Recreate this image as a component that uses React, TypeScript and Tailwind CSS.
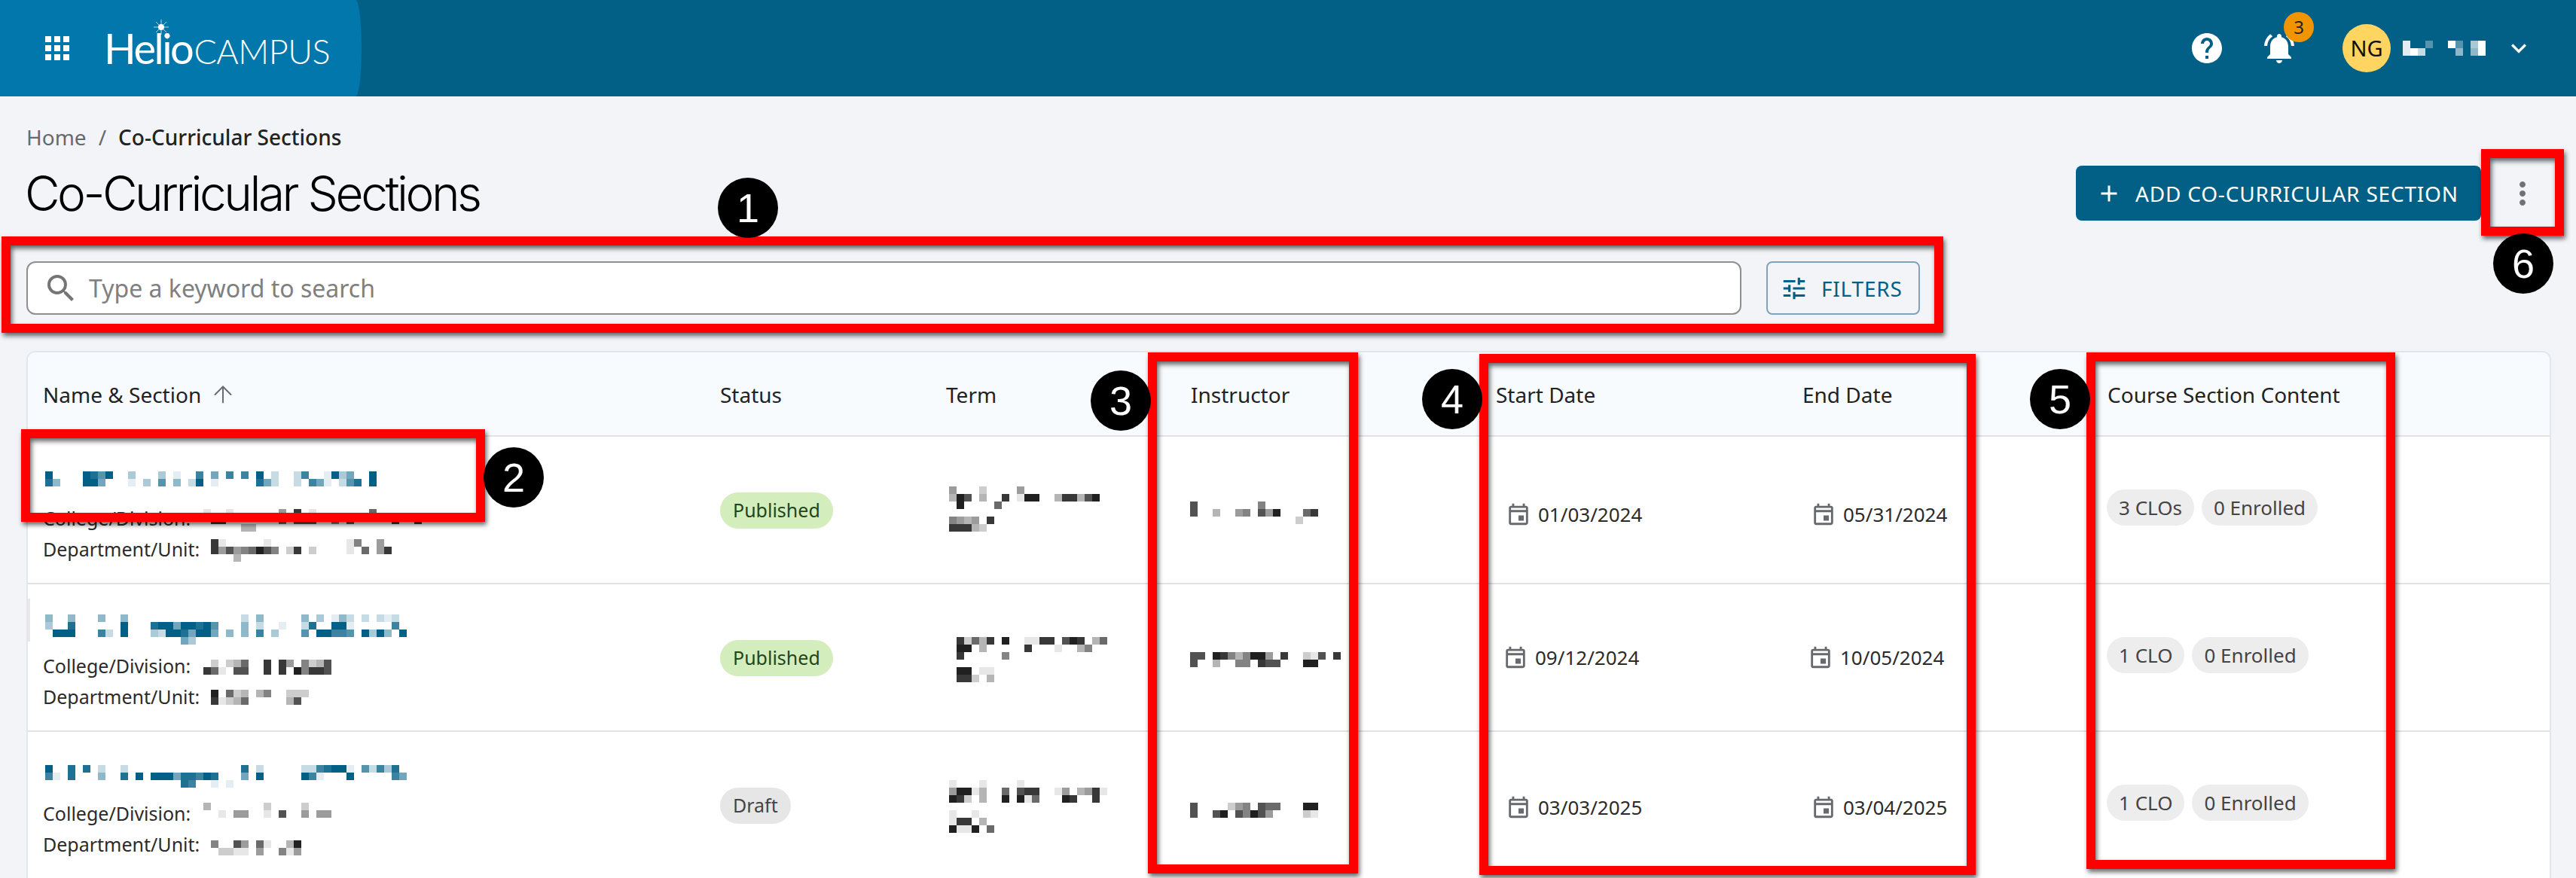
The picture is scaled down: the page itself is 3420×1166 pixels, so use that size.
import { ArrowUp } from "lucide-react";
import {
  MdAdd,
  MdApps,
  MdHelp,
  MdKeyboardArrowDown,
  MdMoreVert,
  MdNotificationsActive,
  MdOutlineEvent,
  MdSearch,
  MdTune,
} from "react-icons/md";

const NOTO = "font-['Noto_Sans','Open_Sans',sans-serif]";

// redacted text in the screenshot: each char is one 10px cell, 1-9 = how dark
const Mosaic = ({ rows, color = "#202020", className = "" }: { rows: string[]; color?: string; className?: string }) => {
  const cols = Math.max(...rows.map((r) => r.length));
  return (
    <svg width={cols * 10} height={rows.length * 10} className={`shrink-0 ${className}`} shapeRendering="crispEdges">
      {rows.map((row, y) =>
        row.split("").map((c, x) =>
          c === "." ? null : <rect key={`${x}-${y}`} x={x * 10} y={y * 10} width={10} height={10} fill={color} fillOpacity={Number(c) / 9} />
        )
      )}
    </svg>
  );
};

const dots = (n: number) => ".".repeat(n);

const sections = [
  {
    namePad: "pt-[46px]",
    name: ["9....9869..3...3.1..7.5.7.7.9.2..27..1935..9", "84...995...1.3.6.4.29.1.....852..2.751.268.9"],
    collegePad: "mt-[8px]",
    college: ["1..1......4.8.1.......6", ".88.......6.777..5.7.....8..8", ".....33"],
    deptPad: "mt-[7px]",
    dept: ["81.....1..........15..4", "847456975.28.2....1.6.48", "...3"],
    status: "Published",
    termPad: "pt-[66px] pl-[24px]",
    term: ["4...2....4", "397.3..8.199..388379", ".9....6", "", "5434.8", "88832"],
    instrPad: "pt-[86px]",
    instr: ["7........5", "7..3..45.749...68", "..............2"],
    startPad: "pl-[37px] pt-[12px]",
    endPad: "pl-[35px] pt-[12px]",
    start: "01/03/2024",
    end: "05/31/2024",
    chipPad: "pb-[6px]",
    chips: ["3 CLOs", "0 Enrolled"],
  },
  {
    namePad: "pt-[40px]",
    name: [
      "4..4...4..4" + dots(15) + "2.4" + dots(5) + "4.3.142.2.212",
      "3..8......9...899599896...4.2..1..28..991.....7",
      ".999...72.9...329985995.4.4.7.3...6.99776.9394.9",
      dots(18) + "53",
    ],
    collegePad: "mt-[12px]",
    college: [".2.236..8.84.5237", "861.77..8.8.95887"],
    deptPad: "mt-[11px]",
    dept: ["9.623.35..222", "81236.....37"],
    status: "Published",
    termPad: "pt-[70px] pl-[34px]",
    term: ["82638.9..1188.798.36", "99.3.....8...1..35", "8.....5", "", "99.11", "882.3"],
    instrPad: "pt-[90px]",
    instr: ["77.98535994.8..217.8", "7..3..55.877...99"],
    startPad: "pl-[33px]",
    endPad: "pl-[31px]",
    start: "09/12/2024",
    end: "10/05/2024",
    chipPad: "pb-[6px]",
    chips: ["1 CLO", "0 Enrolled"],
  },
  {
    namePad: "pt-[44px]",
    name: [
      "9..8.8.2..2" + dots(15) + "8.2" + dots(5) + "2278991.62738",
      "71.8...4..8.9.999588798...5.9.....971...9.....75",
      dots(18) + "87..1.1",
    ],
    collegePad: "mt-[6px]",
    college: ["3.......2....2", "..1.44..1.7..4.44"],
    deptPad: "mt-[15px]",
    dept: ["5..74.61..39", ".2211.4..514"],
    status: "Draft",
    termPad: "pt-[64px] pl-[24px]",
    term: ["1...1....1", "49913..6.788..14.3481", "982.3..9.916...98..8", "", "1..1", "188.3", "9119.6"],
    instrPad: "pt-[94px]",
    instr: ["7....245.766...99", "7..79.75974....21"],
    startPad: "pl-[37px] pt-[6px]",
    endPad: "pl-[35px] pt-[6px]",
    start: "03/03/2025",
    end: "03/04/2025",
    chipPad: "pb-[6px]",
    chips: ["1 CLO", "0 Enrolled"],
  },
];

const RedBox = ({ className }: { className: string }) => (
  <div className={`absolute border-[12px] border-[#ff0000] drop-shadow-[2px_4px_3px_rgba(0,0,0,0.6)] ${className}`} />
);

const Badge = ({ n, className }: { n: number; className: string }) => (
  <div
    className={`absolute flex h-[80px] w-[80px] items-center justify-center rounded-full bg-black font-['Liberation_Sans',sans-serif] text-[54px] leading-none text-white ${className}`}
  >
    {n}
  </div>
);

const DateCell = ({ value, pad }: { value: string; pad: string }) => (
  <div className={`flex items-center gap-[9px] ${pad}`}>
    <MdOutlineEvent className="ml-[-4px] text-[34px] text-[#666a6e]" />
    <span className="text-[26px] text-[#2b2b2b]">{value}</span>
  </div>
);

export default function App() {
  return (
    <div className={`relative h-[1166px] w-full overflow-hidden bg-[#f2f4f8] ${NOTO}`}>
      <header className="flex h-[128px] items-center justify-between bg-[#025f86]">
        <div className="flex h-full w-[480px] items-center rounded-tr-[8px_64px] rounded-br-[8px_64px] bg-[#0277ab] pl-[52px]">
          <MdApps className="text-[48px] text-white" />
          <div className="relative ml-[38px] flex items-baseline font-['Lato',sans-serif] text-white">
            <span className="text-[56px] font-normal leading-none tracking-[-2.5px]">Helio</span>
            <span className="ml-[2px] text-[45px] font-light leading-none tracking-[-0.5px]">CAMPUS</span>
            <svg viewBox="0 0 20 20" className="absolute left-[66px] top-[-10px] h-[20px] w-[20px]">
              <circle cx="10" cy="10" r="4" fill="white" />
              <path d="M10 0v20M0 10h20M3 3l14 14M17 3L3 17" stroke="white" strokeWidth="1" opacity="0.7" />
            </svg>
          </div>
        </div>
        <div className="flex items-center pr-[56px]">
          <MdHelp className="text-[48px] text-white" />
          <div className="relative ml-[48px]">
            <MdNotificationsActive className="text-[48px] text-white" />
            <div className="absolute left-[30px] top-[-24px] flex h-[40px] w-[40px] items-center justify-center rounded-full bg-[#f29400] text-[24px] text-[#222]">
              3
            </div>
          </div>
          <div className="ml-[60px] flex h-[64px] w-[64px] items-center justify-center rounded-full bg-[#ffd562] text-[29px] text-[#111]">
            NG
          </div>
          <Mosaic className="ml-[16px]" color="#ffffff" rows={["8..3..93.69", "897....5.59"]} />
          <MdKeyboardArrowDown className="ml-[24px] text-[40px] text-white" />
        </div>
      </header>

      <main className="pl-[35px] pr-[33px] pt-[34px]">
        <div className="flex h-[40px] items-center text-[28px] leading-none">
          <span className="text-[#666a6e]">Home</span>
          <span className="ml-[16px] text-[#666a6e]">/</span>
          <span className="ml-[16px] font-medium text-[#222]">Co-Curricular Sections</span>
        </div>

        <div className="mr-[-17px] mt-[18px] flex h-[73px] items-center justify-between">
          <h1 className="ml-[-2px] font-['Inter',sans-serif] text-[64px] font-light leading-none tracking-[-3.5px] text-black">
            Co-Curricular Sections
          </h1>
          <div className="flex items-center">
            <button className="flex h-[73px] w-[538px] items-center rounded-[8px] bg-[#025f86] pl-[26px] text-[28px] tracking-[0.8px] text-white">
              <MdAdd className="text-[36px]" />
              <span className="ml-[17px]">ADD CO-CURRICULAR SECTION</span>
            </button>
            <div className="flex h-[73px] w-[110px] items-center justify-center">
              <MdMoreVert className="text-[48px] text-[#6f7177]" />
            </div>
          </div>
        </div>

        <div className="mt-[54px] flex h-[71px] w-[2514px] gap-[33px]">
          <div className="flex flex-1 items-center rounded-[12px] border-2 border-[#8f8f8f] bg-white pl-[20px]">
            <MdSearch className="text-[48px] text-[#757575]" />
            <input
              className="ml-[13px] flex-1 bg-transparent text-[32px] outline-none placeholder:text-[#808080]"
              placeholder="Type a keyword to search"
            />
          </div>
          <button className="flex w-[204px] items-center rounded-[8px] border-2 border-[#7fa3bd] pl-[16px] text-[28px] tracking-[0.8px] text-[#025f86]">
            <MdTune className="text-[38px]" />
            <span className="ml-[17px]">FILTERS</span>
          </button>
        </div>

        <div className="mt-[48px] overflow-hidden rounded-t-[12px] border-2 border-[#e3e6ea] bg-white">
          <div className="grid h-[112px] grid-cols-[899px_300px_325px_405px_407px_1fr] items-center border-b-2 border-[#e0e2e6] bg-[#f8fbfd] pt-[2px] text-[28px] text-[#222]">
            <div className="flex items-center pl-[20px]">
              Name &amp; Section
              <ArrowUp className="ml-[11px] h-[36px] w-[36px] text-[#666a6e]" strokeWidth={1.3} />
            </div>
            <div className="pl-[20px]">Status</div>
            <div className="pl-[20px]">Term</div>
            <div className="pl-[20px]">Instructor</div>
            <div className="pl-[20px]">Start Date</div>
            <div className="flex">
              <div className="w-[405px] shrink-0 pl-[20px]">End Date</div>
              <div className="pl-[20px]">Course Section Content</div>
            </div>
          </div>

          {sections.map((s, i) => (
            <div key={i} className="relative grid h-[196px] grid-cols-[899px_300px_325px_405px_407px_405px_1fr] border-b-2 border-[#e0e2e6]">
              {i === 1 && <div className="absolute left-0 top-[19px] h-[57px] w-[3px] bg-[#e8e8e8]" />}
              <div className="pl-[20px] text-[25px] text-[#2b2b2b]">
                <div className={`h-[88px] ${s.namePad}`}>
                  <Mosaic color="#025f86" className="ml-[3px]" rows={s.name} />
                </div>
                <div className="flex h-[41px] items-start">
                  <span className="w-[213px] shrink-0 pt-[2px]">College/Division:</span>
                  <Mosaic className={s.collegePad} rows={s.college} />
                </div>
                <div className="flex h-[41px] items-start">
                  <span className="w-[223px] shrink-0 pt-[2px]">Department/Unit:</span>
                  <Mosaic className={s.deptPad} rows={s.dept} />
                </div>
              </div>
              <div className="flex items-center pl-[20px] pt-[2px]">
                <span
                  className={`flex h-[48px] items-center rounded-full px-[17px] text-[25px] ${
                    s.status === "Draft" ? "bg-[#e6e6e6] text-[#444]" : "bg-[#d4edbc] text-[#1e4620]"
                  }`}
                >
                  {s.status}
                </span>
              </div>
              <div className={s.termPad}>
                <Mosaic rows={s.term} />
              </div>
              <div className={`pl-[19px] ${s.instrPad}`}>
                <Mosaic rows={s.instr} />
              </div>
              <DateCell value={s.start} pad={s.startPad} />
              <DateCell value={s.end} pad={s.endPad} />
              <div className={`flex items-center gap-[10px] pl-[19px] ${s.chipPad}`}>
                {s.chips.map((c) => (
                  <span key={c} className="flex h-[48px] items-center rounded-full bg-[#ededed] px-[16px] text-[26px] text-[#444]">
                    {c}
                  </span>
                ))}
              </div>
            </div>
          ))}
        </div>
      </main>

      {/* callouts drawn on top of the screenshot */}
      <RedBox className="left-[2px] top-[314px] h-[128px] w-[2578px]" />
      <RedBox className="left-[28px] top-[570px] h-[123px] w-[616px]" />
      <RedBox className="left-[1524px] top-[468px] h-[692px] w-[279px]" />
      <RedBox className="left-[1964px] top-[470px] h-[692px] w-[659px]" />
      <RedBox className="left-[2770px] top-[468px] h-[686px] w-[410px]" />
      <RedBox className="left-[3294px] top-[198px] h-[115px] w-[110px]" />
      <Badge n={1} className="left-[953px] top-[236px]" />
      <Badge n={2} className="left-[642px] top-[594px]" />
      <Badge n={3} className="left-[1448px] top-[492px]" />
      <Badge n={4} className="left-[1888px] top-[490px]" />
      <Badge n={5} className="left-[2695px] top-[490px]" />
      <Badge n={6} className="left-[3310px] top-[310px]" />
    </div>
  );
}
